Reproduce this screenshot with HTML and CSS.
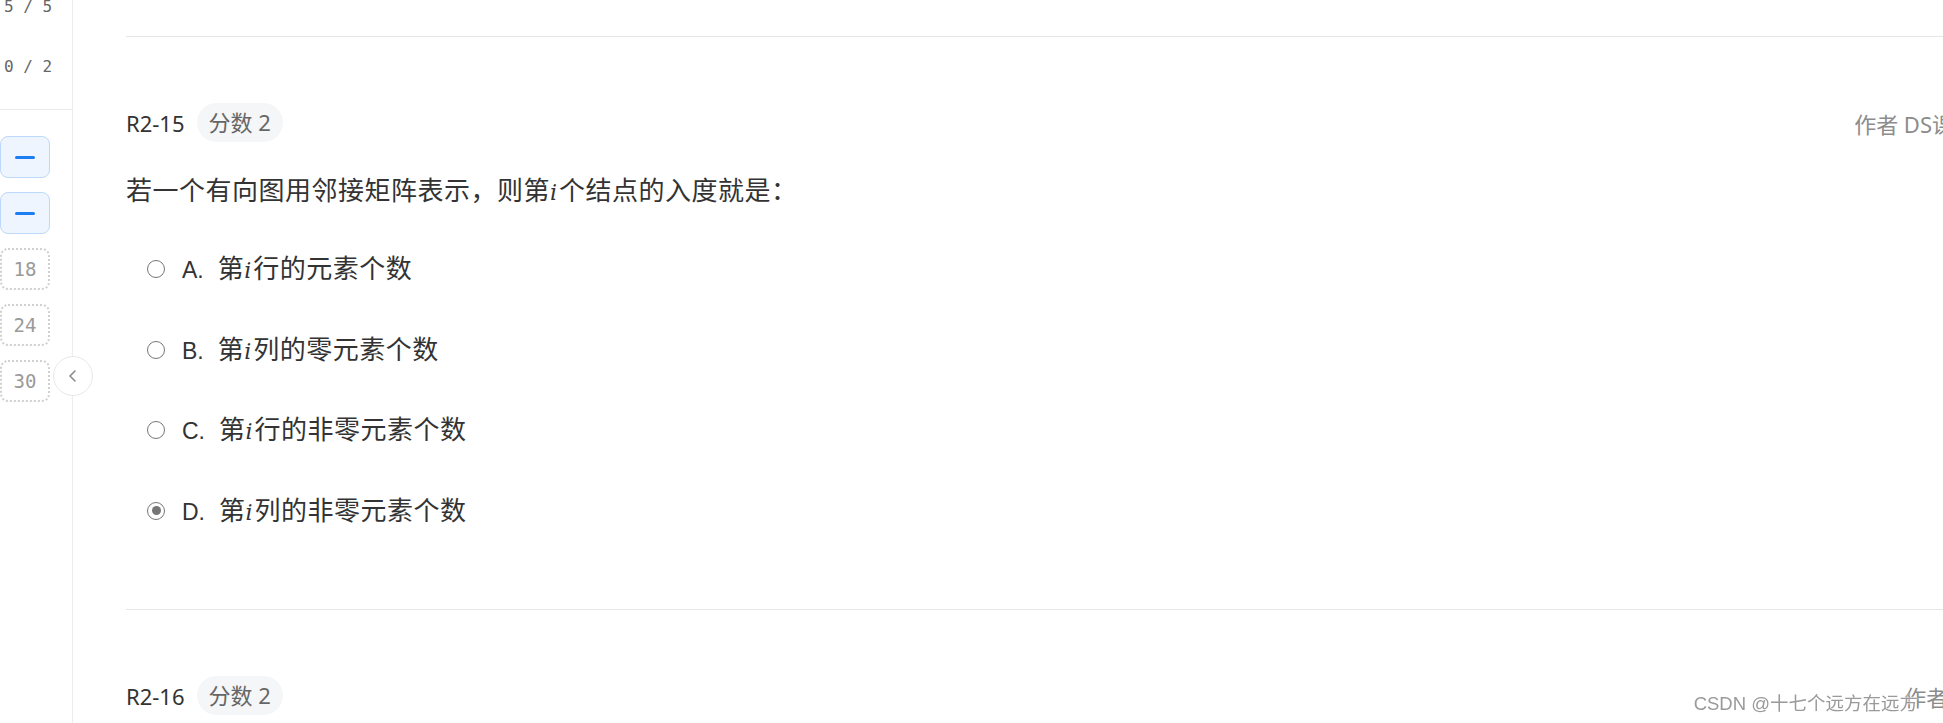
FILE: index.html
```html
<!DOCTYPE html>
<html lang="zh-CN">
<head>
  <meta charset="UTF-8" />
  <title>题目列表</title>
  <link rel="stylesheet" href="styles.css">
</head>
<body>
  <div class="layout">
    <aside class="sidebar">
      <div class="scores">
        <div class="score-row">5 / 5</div>
        <div class="score-row">0 / 2</div>
      </div>
      <div class="nav-list">
        <button class="nav-item active"><span class="dash"></span></button>
        <button class="nav-item active"><span class="dash"></span></button>
        <button class="nav-item">18</button>
        <button class="nav-item">24</button>
        <button class="nav-item">30</button>
      </div>
      <button class="collapse" aria-label="收起">
        <svg width="14" height="14" viewBox="0 0 14 14"><path d="M9 2 L4 7 L9 12" fill="none" stroke="#8a8a8a" stroke-width="1.6" stroke-linecap="round" stroke-linejoin="round"/></svg>
      </button>
    </aside>

    <main class="main">
      <section class="question">
        <div class="q-head">
          <span class="q-no">R2-15</span>
          <span class="pill">分数 2</span>
          <span class="author">作者 DS课程组</span>
        </div>
        <p class="q-text"><span class="cjk">若一个有向图用邻接矩阵表示，则第</span><span class="math">i</span><span class="cjk">个结点的入度就是：</span></p>
        <ul class="options">
          <li class="option"><span class="radio"></span><span class="label"><span class="opt-key">A.</span><span class="cjk">第</span><span class="math">i</span><span class="cjk">行的元素个数</span></span></li>
          <li class="option"><span class="radio"></span><span class="label"><span class="opt-key">B.</span><span class="cjk">第</span><span class="math">i</span><span class="cjk">列的零元素个数</span></span></li>
          <li class="option"><span class="radio"></span><span class="label"><span class="opt-key">C.</span><span class="cjk">第</span><span class="math">i</span><span class="cjk">行的非零元素个数</span></span></li>
          <li class="option"><span class="radio checked"></span><span class="label"><span class="opt-key">D.</span><span class="cjk">第</span><span class="math">i</span><span class="cjk">列的非零元素个数</span></span></li>
        </ul>
      </section>

      <section class="question">
        <div class="q-head">
          <span class="q-no">R2-16</span>
          <span class="pill">分数 2</span>
          <span class="author">作者 陈越</span>
        </div>
      </section>
    </main>
  </div>

  <div class="watermark">CSDN @十七个远方在远方</div>
</body>
</html>
```

FILE: styles.css
```css
* {
  margin: 0;
  padding: 0;
  box-sizing: border-box;
}
body {
  font-family: "Noto Sans", "Noto Sans CJK SC", sans-serif;
  background: #fff;
  color: #333;
  height: 100vh;
  overflow: hidden;
}

/* LAYOUT */
.layout {
  display: flex;
  height: 100vh;
}

/* SIDEBAR */
.sidebar {
  position: relative;
  flex: 0 0 73px;
  border-right: 1px solid #ececec;
}
.scores {
  margin-top: -23px;
  padding-bottom: 12px;
  border-bottom: 1px solid #ececec;
}
.score-row {
  height: 60px; line-height: 60px;
  padding-left: 4px;
  font-family: "DejaVu Sans Mono", monospace;
  font-size: 16px; color: #666;
}
.nav-list {
  display: flex; flex-direction: column;
  gap: 14px; padding-top: 26px;
}
.nav-item {
  width: 50px; height: 42px;
  border: 2px dotted #d0d0d0; border-radius: 8px;
  background: #fff;
  font-family: "DejaVu Sans Mono", monospace;
  font-size: 19px; color: #9a9a9a;
  display: flex; align-items: center; justify-content: center;
}
.nav-item.active {
  background: #eef5fe;
  border: 1px solid #bcd8fa;
}
.dash {
  width: 20px; height: 3px;
  border-radius: 2px;
  background: #1b7ef2;
}
.collapse {
  position: absolute; left: 53px; top: 356px;
  width: 40px; height: 40px;
  border: 1px solid #e8e8e8; border-radius: 50%;
  background: #fff;
  display: flex; align-items: center; justify-content: center;
}

/* QUESTIONS */
.main {
  flex: 0 0 auto;
  padding-left: 53px;
}
.question {
  width: 1872px;
  border-top: 1px solid #e6e6e6;
  padding-top: 66px;
  margin-top: 36px;
}
.question + .question {
  margin-top: 0;
}
.q-head {
  display: flex; align-items: center;
  height: 39px;
}
.q-no {
  font-size: 22px; color: #333;
  margin-right: 12px;
}
.pill {
  height: 39px; line-height: 39px;
  padding: 0 12px;
  border-radius: 20px;
  background: #f5f6f7;
  font-size: 22px; color: #666;
}
.author {
  margin-left: auto;
  font-size: 22px; color: #8c8c8c;
}
.cjk {
  font-family: "Noto Sans CJK SC", sans-serif;
  font-size: 26px;
  letter-spacing: 0.5px;
}
.q-text {
  margin-top: 30px;
  font-size: 22px; line-height: 34px;
  color: #333;
}
.math {
  font-family: "DejaVu Serif", serif;
  font-style: italic;
  font-size: 22px;
  padding: 0 2px 0 0;
}
.options {
  list-style: none;
  margin-top: 19px;
  padding-bottom: 58px;
}
.option {
  display: flex; align-items: center;
  height: 80.5px;
  padding-left: 21px;
  color: #333;
}
.label {
  font-size: 23px; line-height: 34px;
}
.radio {
  width: 18px; height: 18px;
  border: 1.5px solid #767676; border-radius: 50%;
  margin-right: 17px;
  display: flex; align-items: center; justify-content: center;
}
.radio.checked::after {
  content: '';
  width: 9px; height: 9px;
  border-radius: 50%;
  background: #767676;
}
.opt-key {
  font-family: "Liberation Sans", sans-serif;
  margin-right: 14px;
}

/* WATERMARK */
.watermark {
  position: fixed; right: 25px; bottom: 8px;
  font-family: "Liberation Sans", "Noto Sans CJK SC", sans-serif;
  font-size: 18.5px; color: #9a9a9a;
  text-shadow: 0 0 2px #fff, 0 0 2px #fff;
}
```
